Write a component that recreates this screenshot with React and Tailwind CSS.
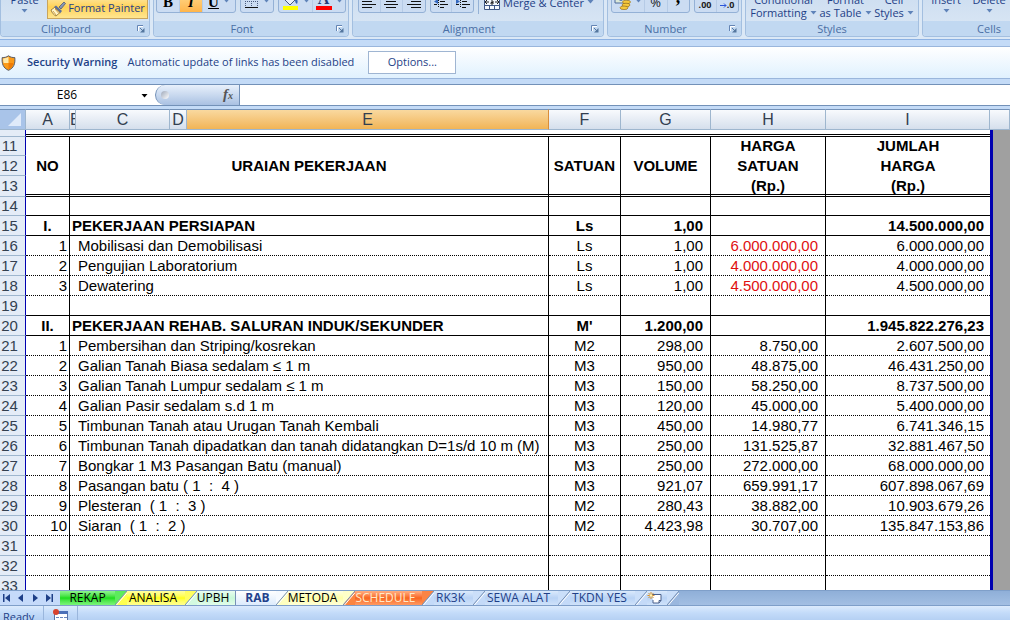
import { useState } from 'react'

const ROWS = [
  { n: 14, h: 'h-[19px]', line: 'solid' },
  { n: 15, no: 'I.', text: 'PEKERJAAN PERSIAPAN', unit: 'Ls', vol: '1,00', total: '14.500.000,00', head: true, line: 'solid' },
  { n: 16, no: '1', text: 'Mobilisasi dan Demobilisasi', unit: 'Ls', vol: '1,00', price: '6.000.000,00', total: '6.000.000,00', red: true },
  { n: 17, no: '2', text: 'Pengujian Laboratorium', unit: 'Ls', vol: '1,00', price: '4.000.000,00', total: '4.000.000,00', red: true },
  { n: 18, no: '3', text: 'Dewatering', unit: 'Ls', vol: '1,00', price: '4.500.000,00', total: '4.500.000,00', red: true },
  { n: 19, line: 'solid' },
  { n: 20, no: 'II.', text: 'PEKERJAAN REHAB. SALURAN INDUK/SEKUNDER', unit: "M'", vol: '1.200,00', total: '1.945.822.276,23', head: true, line: 'solid' },
  { n: 21, no: '1', text: 'Pembersihan dan Striping/kosrekan', unit: 'M2', vol: '298,00', price: '8.750,00', total: '2.607.500,00' },
  { n: 22, no: '2', text: 'Galian Tanah Biasa sedalam ≤ 1 m', unit: 'M3', vol: '950,00', price: '48.875,00', total: '46.431.250,00' },
  { n: 23, no: '3', text: 'Galian Tanah Lumpur sedalam ≤ 1 m', unit: 'M3', vol: '150,00', price: '58.250,00', total: '8.737.500,00' },
  { n: 24, no: '4', text: 'Galian Pasir sedalam s.d 1 m', unit: 'M3', vol: '120,00', price: '45.000,00', total: '5.400.000,00' },
  { n: 25, no: '5', text: 'Timbunan Tanah atau Urugan Tanah Kembali', unit: 'M3', vol: '450,00', price: '14.980,77', total: '6.741.346,15' },
  { n: 26, no: '6', text: 'Timbunan Tanah dipadatkan dan tanah didatangkan D=1s/d 10 m (M)', unit: 'M3', vol: '250,00', price: '131.525,87', total: '32.881.467,50' },
  { n: 27, no: '7', text: 'Bongkar 1 M3 Pasangan Batu (manual)', unit: 'M3', vol: '250,00', price: '272.000,00', total: '68.000.000,00' },
  { n: 28, no: '8', text: 'Pasangan batu ( 1  :  4 )', unit: 'M3', vol: '921,07', price: '659.991,17', total: '607.898.067,69' },
  { n: 29, no: '9', text: 'Plesteran  ( 1  :  3 )', unit: 'M2', vol: '280,43', price: '38.882,00', total: '10.903.679,26' },
  { n: 30, no: '10', text: 'Siaran  ( 1  :  2 )', unit: 'M2', vol: '4.423,98', price: '30.707,00', total: '135.847.153,86' },
  { n: 31 },
  { n: 32 },
  { n: 33 },
]

const TABS = [
  { name: 'REKAP', width: 'w-[55px]', body: 'bg-linear-to-b from-[#8df58d] via-[#17dd17] to-[#7bf57b] text-black', top: '#5cec5c', bottom: '#2fe32f' },
  { name: 'ANALISA', width: 'w-[58px] pr-[6px]', body: 'bg-linear-to-b from-[#ffffa0] via-[#ffff10] to-[#ffff90] text-black', top: '#ffff60', bottom: '#ffff50' },
  { name: 'UPBH', width: 'w-[39px] pr-[6px]', body: 'bg-linear-to-b from-[#e9fdf0] via-[#c8f8d8] to-[#e2fdea] text-black', top: '#d8fae4', bottom: '#d4fae0' },
  { name: 'RAB', width: 'w-[40px] pl-[3px]', body: 'bg-linear-to-b from-white to-[#dcebfd] font-bold text-[#23418c]', top: '#f6faff', bottom: '#e2effd' },
  { name: 'METODA', width: 'w-[55px] pr-[6px]', body: 'bg-linear-to-b from-[#ffffe4] via-[#ffffa8] to-[#ffffd8] text-black', top: '#ffffc8', bottom: '#ffffc0' },
  { name: 'SCHEDULE', width: 'w-[67px] pr-[6px]', body: 'bg-linear-to-b from-[#ffae80] via-[#f8651c] to-[#ff9a60] text-[#ffe9c8]', top: '#fb8444', bottom: '#fc8440' },
  { name: 'RK3K', width: 'w-[39px] pr-[6px]', body: 'bg-linear-to-b from-[#dbeafc] via-[#b9d3f5] to-[#cfe2fa] text-[#1f3f87]', top: '#cbdff9', bottom: '#c4daf8' },
  { name: 'SEWA ALAT', width: 'w-[73px] pr-[6px]', body: 'bg-linear-to-b from-[#dbeafc] via-[#b9d3f5] to-[#cfe2fa] text-[#1f3f87]', top: '#cbdff9', bottom: '#c4daf8' },
  { name: 'TKDN YES', width: 'w-[65px] pr-[6px]', body: 'bg-linear-to-b from-[#dbeafc] via-[#b9d3f5] to-[#cfe2fa] text-[#1f3f87]', top: '#cbdff9', bottom: '#c4daf8' },
]

const Caret = ({ className = 'fill-[#5f83b9]' }) => (
  <svg className={`box-content h-[4px] w-[7px] shrink-0 ${className}`} viewBox="0 0 7 4" aria-hidden="true">
    <path d="M.5 0h6L3.5 3.5z" />
  </svg>
)

const Launcher = ({ label }) => (
  <button aria-label={label} className="absolute right-1 top-[3px]">
    <svg width="9" height="9" viewBox="0 0 9 9" fill="none">
      <path d="M1.5 7V1.5H7" stroke="#6485b4" />
      <path d="M2.5 7V2.5H7" stroke="#fff" />
      <path d="M4 4l3.5 3.5" stroke="#55779f" />
      <path d="M8.5 4v4.5H4z" fill="#55779f" />
    </svg>
  </button>
)

const Group = ({ title, width, launcher, children }) => (
  <section className={`flex flex-col overflow-hidden rounded-b border border-t-0 border-[#a3bfe0] bg-linear-to-b from-[#cfdff1] to-[#dce8f5] ${width}`}>
    <div className="flex h-[21px] items-end justify-center overflow-hidden">{children}</div>
    <div className={`relative h-[15px] bg-[#c1d8f1] text-center text-[11px] leading-4 text-[#4a6fa5] ${launcher ? 'pr-[18px]' : ''}`}>
      {title}
      {launcher && <Launcher label={`${title} settings`} />}
    </div>
  </section>
)

const ButtonStrip = ({ children }) => (
  <div className="mb-2 flex h-6 shrink-0 items-stretch divide-x divide-[#b6cbe6] overflow-hidden rounded-[3px] border border-[#94b1d6] bg-[#cbdcf2]">
    {children}
  </div>
)

const Tool = ({ label, width, className = '', children }) => (
  <button aria-label={label} className={`flex items-end justify-center gap-1 ${width} ${className}`}>
    {children}
  </button>
)

const Lines = ({ d }) => (
  <svg width="15" height="17" viewBox="0 0 15 17" aria-hidden="true" className="mb-1">
    <path d={d} stroke="#111" />
  </svg>
)

const TallButton = ({ label, second, width }) => (
  <button className={`flex h-8 shrink-0 flex-col items-center justify-end whitespace-pre leading-[13px] ${width} ${second ? 'mb-[2px]' : 'mb-[6px]'}`}>
    <span>{label}</span>
    {second ? (
      <span className="flex items-center gap-[3px]">
        {second}
        <Caret />
      </span>
    ) : (
      <span className="flex h-[9px] items-center">
        <Caret />
      </span>
    )}
  </button>
)

const Ribbon = () => (
  <header className="flex h-10 gap-[3px] overflow-hidden border-b border-[#8db2e3] bg-[#dbe8f6] pb-[2px] text-[11px] text-[#1e3f87]">
    <Group title="Clipboard" width="w-[150px] shrink-0" launcher>
      <TallButton label="Paste" width="w-[45px]" />
      <button className="mb-[2px] flex h-6 shrink-0 items-center gap-[2px] border border-[#c9a45c] bg-linear-to-b from-[#fde8a4] via-[#ffd253] to-[#ffe690] px-[2px] pt-[3px] whitespace-nowrap">
        <svg width="16" height="16" viewBox="0 0 16 16" aria-hidden="true">
          <path d="M9 6l5-5 1.5 1.5L11 8z" fill="#8896b4" stroke="#43506e" strokeWidth="0.7" />
          <path d="M6 4.5l6 5.5-2 2.5L4 6z" fill="#5b6f9c" />
          <path d="M4.5 6.5L1 9c1 3 3 5 5 6l4-3.5z" fill="#fff6c9" stroke="#8b6a25" strokeWidth="0.8" />
          <path d="M3 10l3 4M5 8l3.5 4" stroke="#c98d2b" strokeWidth="0.8" />
        </svg>
        Format Painter
      </button>
    </Group>
    <Group title="Font" width="w-[196px] shrink-0" launcher>
      <div className="flex gap-1">
        <ButtonStrip>
          <Tool label="Bold" width="w-[23px]" className="font-['Liberation_Serif',serif] text-[15px] font-bold leading-5 text-black">B</Tool>
          <Tool label="Italic" width="w-[23px]" className="bg-linear-to-b from-[#ffdf93] to-[#ffb54a] font-['Liberation_Serif',serif] text-[15px] font-bold italic leading-5 text-black">I</Tool>
          <Tool label="Underline" width="w-[32px]" className="font-['Liberation_Serif',serif] text-[15px] font-bold leading-5 text-black">
            <span className="underline">U</span>
            <Caret className="mb-[9px] fill-[#5f83b9]" />
          </Tool>
        </ButtonStrip>
        <ButtonStrip>
          <Tool label="Borders" width="w-[32px]">
            <svg width="14" height="14" viewBox="0 0 14 14" className="mb-[3px]" aria-hidden="true">
              <path d="M.5 0v13M6.5 0v13M12.5 0v13M0 6.5h13" stroke="#4a5b80" strokeDasharray="1 1" />
              <path d="M0 12.5h13" stroke="#111" />
            </svg>
            <Caret className="mb-[9px] fill-[#5f83b9]" />
          </Tool>
        </ButtonStrip>
        <ButtonStrip>
          <Tool label="Fill color" width="w-[34px]">
            <svg width="17" height="17" viewBox="0 0 17 17" className="mb-[2px]" aria-hidden="true">
              <path d="M3 7l6-5 5 4-6 6z" fill="#e9f0fb" stroke="#44587f" />
              <path d="M13 5c3 1 3 4 2 6-2-1-2-3-2-6z" fill="#3565b8" />
              <path d="M1 13h15v4H1z" fill="#ff0" />
            </svg>
            <Caret className="mb-[9px] fill-[#5f83b9]" />
          </Tool>
          <Tool label="Font color" width="w-[32px]">
            <span className="mb-[2px] w-4 border-b-4 border-[#f00] font-['Liberation_Serif',serif] text-[16px] font-bold leading-[14px] text-[#253f7c]">A</span>
            <Caret className="mb-[9px] fill-[#5f83b9]" />
          </Tool>
        </ButtonStrip>
      </div>
    </Group>
    <Group title="Alignment" width="w-[252px] shrink-0" launcher>
      <div className="flex items-end gap-1 pr-1">
        <ButtonStrip>
          <Tool label="Align left" width="w-[22px]"><Lines d="M0 7.5h14M0 10.5h10M0 13.5h14M0 16.5h10" /></Tool>
          <Tool label="Center" width="w-[22px]"><Lines d="M0 7.5h14M2 10.5h10M0 13.5h14M2 16.5h10" /></Tool>
          <Tool label="Align right" width="w-[22px]"><Lines d="M0 7.5h14M4 10.5h10M0 13.5h14M4 16.5h10" /></Tool>
        </ButtonStrip>
        <ButtonStrip>
          <Tool label="Decrease indent" width="w-[21px]">
            <svg width="16" height="17" viewBox="0 0 16 17" className="mb-1" aria-hidden="true">
              <path d="M0 7.5h3M6 7.5h9M7 10.5h5M7 13.5h8M1 13.5h3M7 16.5h4" stroke="#111" />
              <path d="M5 8v5L1 10.5z" fill="#3468c0" />
              <path d="M5.5 7v10" stroke="#111" strokeDasharray="1 1" />
            </svg>
          </Tool>
          <Tool label="Increase indent" width="w-[21px]">
            <svg width="16" height="17" viewBox="0 0 16 17" className="mb-1" aria-hidden="true">
              <path d="M0 7.5h3M6 7.5h9M7 10.5h5M7 13.5h8M1 13.5h3M7 16.5h4" stroke="#111" />
              <path d="M1 8v5l4-2.5z" fill="#3468c0" />
              <path d="M5.5 7v10" stroke="#111" strokeDasharray="1 1" />
            </svg>
          </Tool>
        </ButtonStrip>
        <button className="mb-[7px] flex h-6 shrink-0 items-end gap-[3px] whitespace-nowrap border-l border-[#94b1d6] pl-[5px] leading-[22px]">
          <svg width="16" height="16" viewBox="0 0 16 16" className="mb-[4px]" aria-hidden="true">
            <path d="M.5 0v15.5h15V0M0 11.5h16M5.5 12v4M10.5 12v4M0 4.5h16" stroke="#3f5784" fill="#f4f8fd" />
            <path d="M1 8h4M11 8h4M3 6l-2 2 2 2M13 6l2 2-2 2" stroke="#222" fill="none" />
            <path d="M7 7h2v3H7V8.5h2" stroke="#222" fill="none" />
          </svg>
          Merge &amp; Center
          <Caret className="mb-[10px] fill-[#5f83b9]" />
        </button>
      </div>
    </Group>
    <Group title="Number" width="w-[135px] shrink-0" launcher>
      <div className="flex gap-1">
        <ButtonStrip>
          <Tool label="Accounting format" width="w-[33px]">
            <svg width="17" height="17" viewBox="0 0 17 17" className="mb-[2px]" aria-hidden="true">
              <path d="M1 2h12v8H1z" fill="#dce8d8" stroke="#4d6b9c" />
              <circle cx="7" cy="6" r="2" fill="#5577b0" />
              <ellipse cx="12.5" cy="9" rx="4" ry="1.8" fill="#f6c93c" stroke="#96701a" strokeWidth="0.7" />
              <ellipse cx="12" cy="12" rx="4" ry="1.8" fill="#f6c93c" stroke="#96701a" strokeWidth="0.7" />
              <ellipse cx="10" cy="14.8" rx="4" ry="1.8" fill="#f6c93c" stroke="#96701a" strokeWidth="0.7" />
            </svg>
            <Caret className="mb-[9px] fill-[#5f83b9]" />
          </Tool>
          <Tool label="Percent" width="w-[23px]" className="text-[13px] leading-[20px] text-[#222]">%</Tool>
          <Tool label="Comma style" width="w-[21px]" className="pb-[6px] font-['Liberation_Serif',serif] text-[18px] font-bold leading-[18px] text-black">,</Tool>
        </ButtonStrip>
        <ButtonStrip>
          <Tool label="Increase decimal" width="w-[22px]" className="pb-px text-[9px] font-bold leading-[12px] text-[#222]">
            <span>.00<br />.00</span>
          </Tool>
          <Tool label="Decrease decimal" width="w-[21px]" className="pb-px text-[9px] font-bold leading-[12px] text-[#222]">
            <span className="flex flex-col items-end">
              <span>.00</span>
              <span className="flex items-center">
                <svg width="7" height="5" viewBox="0 0 7 5" aria-hidden="true">
                  <path d="M0 2.5h6M4 .5l2 2-2 2" fill="none" stroke="#2c55d8" />
                </svg>
                .0
              </span>
            </span>
          </Tool>
        </ButtonStrip>
      </div>
    </Group>
    <Group title="Styles" width="w-[174px] shrink-0">
      <TallButton label="Conditional" second="Formatting" width="w-[70px]" />
      <TallButton label="Format" second="as Table" width="w-[54px]" />
      <TallButton label="Cell" second="Styles" width="w-[43px]" />
    </Group>
    <Group title="Cells" width="w-[134px] shrink-0">
      <TallButton label="Insert" width="w-[44px]" />
      <TallButton label="Delete" width="w-[42px]" />
      <TallButton label="Format" width="w-[44px]" />
    </Group>
  </header>
)

const SecurityBar = () => (
  <div className="mt-[6px] flex h-[33px] items-center border-y border-[#9ab6dc] bg-linear-to-b from-white to-[#e0f1fe] text-[11px] text-[#1e4287]">
    <svg className="ml-px h-4 w-[15px] shrink-0" viewBox="0 0 15 16" aria-hidden="true">
      <path d="M7.5.8C5.5 2.3 3.5 2.6 1.2 2.6c-.6 6 1 10.5 6.3 12.7 5.3-2.2 6.9-6.7 6.3-12.7-2.3 0-4.3-.3-6.3-1.8z" fill="#fb9a18" stroke="#555a66" />
      <path d="M7.5 1.8C5.8 3 4.2 3.4 2.2 3.5c-.1 1.8 0 3.3.4 4.5h4.9z" fill="#ffe9a8" />
      <path d="M7.5 8h5c-.7 2.9-2.3 5-5 6.3z" fill="#f07c05" />
    </svg>
    <strong className="ml-[11px] font-semibold whitespace-nowrap">Security Warning</strong>
    <span className="ml-[10px] whitespace-nowrap">Automatic update of links has been disabled</span>
    <button className="ml-[14px] h-[23px] w-[88px] shrink-0 border border-[#9fb5d2] bg-white">Options...</button>
  </div>
)

const FormulaBar = () => (
  <div className="mt-[5px] flex h-[22px] border-y border-[#7391b8] bg-white">
    <input
      aria-label="Name box"
      defaultValue="E86"
      className="w-[134px] shrink-0 bg-white text-center text-[12px] text-black outline-none"
    />
    <button aria-label="Name list" className="flex w-[21px] shrink-0 items-center justify-center bg-white pt-px">
      <Caret className="fill-black" />
    </button>
    <div className="flex w-[85px] shrink-0 items-center justify-between rounded-l-full border-r border-l border-[#7391b8] bg-linear-to-b from-[#e8f0fb] via-[#c9d9ef] to-[#a9c0e2] pr-[6px] pl-[5px]">
      <span className="size-2 rounded-full bg-linear-to-br from-[#9fa9ba] to-white" />
      <button aria-label="Insert function" className="font-['Liberation_Serif',serif] text-[15px] font-bold italic leading-4 text-[#555]">
        f<span className="text-[10px]">x</span>
      </button>
    </div>
    <input aria-label="Formula" className="min-w-0 flex-1 bg-white px-2 text-[12px] outline-none" />
  </div>
)

const COLUMN_HEAD = 'border-r border-[#9eb6ce] bg-linear-to-b from-[#f8fafd] to-[#d5dfec] font-normal'
const ROW_HEAD = 'overflow-hidden border-r border-b border-r-[#0000b0] border-b-[#9eb6ce] bg-[#e4ecf7] pr-[6px] text-center font-normal text-[#333f50]'

const RowHead = ({ children }) => (
  <th scope="row" className={ROW_HEAD}>
    {children}
  </th>
)

const Outside = ({ rowSpan }) => <td rowSpan={rowSpan} className="border-l-[3px] border-[#0000b0] bg-[#a0a0a0]" />

const DataRow = ({ row }) => {
  const line = row.line === 'solid' ? 'border-b border-black' : 'border-b border-dotted border-black'
  const weight = row.head ? 'font-bold' : ''
  const cell = `border-r ${line} [border-right-style:solid] whitespace-pre overflow-hidden ${weight}`

  return (
    <tr className={row.h || 'h-5'}>
      <RowHead>{row.n}</RowHead>
      <td className={`${cell} ${row.head ? 'text-center' : 'pr-[2px] text-right'}`}>{row.no}</td>
      <td colSpan={4} className={`${cell} ${row.head ? 'pl-[2px]' : 'pl-2'}`}>{row.text}</td>
      <td className={`${cell} text-center`}>{row.unit}</td>
      <td className={`${cell} pr-[7px] text-right`}>{row.vol}</td>
      <td className={`${cell} pr-[7px] text-right ${row.red ? 'text-[#e01010]' : ''}`}>{row.price}</td>
      <td className={`${line} overflow-hidden pr-[6px] text-right ${weight}`}>{row.total}</td>
      <Outside />
    </tr>
  )
}

const TitleCell = ({ colSpan, last, children }) => (
  <th colSpan={colSpan} rowSpan={3} className={`border-b-[3px] border-double border-black ${last ? '' : 'border-r [border-right-style:solid]'}`}>
    <div className="flex h-[57px] flex-col items-center justify-center leading-5">{children}</div>
  </th>
)

const Sheet = () => (
  <main className="mt-[3px] min-h-0 flex-1 overflow-hidden bg-white font-['Liberation_Sans',Arial,sans-serif] text-[15px] leading-[18px] text-black">
    <table className="w-full table-fixed border-separate border-spacing-0">
      <colgroup>
        <col className="w-[26px]" />
        <col className="w-[44px]" />
        <col className="w-[6px]" />
        <col className="w-[94px]" />
        <col className="w-[17px]" />
        <col className="w-[362px]" />
        <col className="w-[72px]" />
        <col className="w-[90px]" />
        <col className="w-[115px]" />
        <col className="w-[164px]" />
        <col />
      </colgroup>
      <thead>
        <tr className="h-[21px] text-[16px] text-[#333f50] [&>th]:border-t [&>th]:border-b [&>th]:border-t-[#7391b8] [&>th]:border-b-[#9eb6ce]">
          <th className="border-r border-[#9eb6ce] bg-[#a9c4e9]">
            <svg className="ml-2 block size-[13px]" viewBox="0 0 13 13" aria-hidden="true">
              <path d="M13 0v13H0z" fill="#dfeafa" />
            </svg>
          </th>
          <th className={COLUMN_HEAD}>A</th>
          <th className={`${COLUMN_HEAD} overflow-hidden`}><div className="w-[5px] overflow-hidden">B</div></th>
          <th className={COLUMN_HEAD}>C</th>
          <th className={COLUMN_HEAD}>D</th>
          <th className="border-r border-[#d98d3a] bg-linear-to-b from-[#f9d99f] to-[#f1b455] font-normal">E</th>
          <th className={COLUMN_HEAD}>F</th>
          <th className={COLUMN_HEAD}>G</th>
          <th className={COLUMN_HEAD}>H</th>
          <th className={COLUMN_HEAD}>I</th>
          <th className={COLUMN_HEAD} />
        </tr>
      </thead>
      <tbody>
        <tr className="h-[7px]">
          <th className={ROW_HEAD} />
          <td colSpan={9} className="border-b-[3px] border-double border-black" />
          <Outside />
        </tr>
        <tr className="h-[19px]">
          <RowHead>11</RowHead>
          <TitleCell>NO</TitleCell>
          <TitleCell colSpan={4}>URAIAN PEKERJAAN</TitleCell>
          <TitleCell>SATUAN</TitleCell>
          <TitleCell>VOLUME</TitleCell>
          <TitleCell>
            <span>HARGA</span>
            <span>SATUAN</span>
            <span>(Rp.)</span>
          </TitleCell>
          <TitleCell last>
            <span>JUMLAH</span>
            <span>HARGA</span>
            <span>(Rp.)</span>
          </TitleCell>
          <Outside rowSpan={3} />
        </tr>
        <tr className="h-5"><RowHead>12</RowHead></tr>
        <tr className="h-[21px]"><RowHead>13</RowHead></tr>
        {ROWS.map((row) => (
          <DataRow key={row.n} row={row} />
        ))}
      </tbody>
    </table>
  </main>
)

// Slanted edge shared by two neighbouring tabs
const Slash = ({ left, right }) => (
  <svg className="h-full w-3 shrink-0" viewBox="0 0 12 14" preserveAspectRatio="none" aria-hidden="true">
    <path d="M0 0h12L0 14z" fill={left} />
    <path d="M12 0v14H0z" fill={right} />
    <path d="M0 14L12 0" stroke="#7891b5" />
    <path d="M1.5 14L12 1.7" stroke="#fff" />
  </svg>
)

const SheetTabs = () => {
  const [active, setActive] = useState('RAB')

  return (
    <nav className="flex h-4 shrink-0 border-t border-b border-[#7f9fc9] bg-linear-to-b from-[#8fafd8] to-[#a3bfe3] text-[12px] leading-[14px]">
      <div className="flex w-[60px] shrink-0 items-center justify-around bg-[#c5dafa] fill-[#1e3f87] pr-1">
        <button aria-label="First sheet"><svg width="8" height="8" viewBox="0 0 8 8"><path d="M0 0h1.5v8H0zM7 0v8L2 4z" /></svg></button>
        <button aria-label="Previous sheet"><svg width="8" height="8" viewBox="0 0 8 8"><path d="M6 0v8L1 4z" /></svg></button>
        <button aria-label="Next sheet"><svg width="8" height="8" viewBox="0 0 8 8"><path d="M2 0v8l5-4z" /></svg></button>
        <button aria-label="Last sheet"><svg width="8" height="8" viewBox="0 0 8 8"><path d="M6.5 0H8v8H6.5zM1 0v8l5-4z" /></svg></button>
      </div>
      {TABS.map((tab, i) => (
        <div key={tab.name} className="flex shrink-0">
          <button
            aria-current={tab.name === active}
            onClick={() => setActive(tab.name)}
            className={`flex items-center justify-center whitespace-nowrap ${tab.width} ${tab.body} ${tab.name === 'UPBH' ? 'border-r border-[#7891b5]' : ''}`}
          >
            {tab.name}
          </button>
          {tab.name !== 'UPBH' && <Slash left={tab.top} right={TABS[i + 1] ? TABS[i + 1].bottom : '#c4daf8'} />}
        </div>
      ))}
      <button aria-label="Insert worksheet" className="w-5 shrink-0 bg-linear-to-b from-[#dbeafc] via-[#b9d3f5] to-[#cfe2fa]">
        <svg width="16" height="14" viewBox="0 0 16 14">
          <path d="M5 3.5h9v6L12 12H6V9" fill="#fff" stroke="#4a618c" />
          <path d="M14 9.5h-2V12" fill="none" stroke="#4a618c" />
          <path d="M4 1v7M.5 4.5h7M1.5 2l5 5M6.5 2l-5 5" stroke="#d9912a" />
          <circle cx="4" cy="4.5" r="1.3" fill="#fff3b0" />
        </svg>
      </button>
      <Slash left="#cbdff9" right="#9ab7de" />
    </nav>
  )
}

const StatusBar = () => (
  <footer className="flex h-[14px] shrink-0 items-start overflow-hidden bg-linear-to-b from-[#dcebfd] via-[#c3dbf9] to-[#b5d0f3] text-[11px] text-[#1e3f87]">
    <span className="w-[43px] pt-[3px] pl-[3px] leading-4">Ready</span>
    <div className="flex h-full w-[35px] justify-center border-x border-[#9ab6dc] pt-[3px]">
      <svg width="16" height="16" viewBox="0 0 16 16" aria-hidden="true">
        <path d="M1.5 2.5h13v12h-13z" fill="#fff" stroke="#5a74a8" />
        <path d="M1 2h14v3H1z" fill="#4c70b8" />
        <path d="M3 8.5h3M7 8.5h3M11 8.5h3M3 11.5h3M7 11.5h3M11 11.5h3" stroke="#6b88bf" />
        <circle cx="3" cy="3" r="3" fill="#d8432f" />
      </svg>
    </div>
  </footer>
)

const App = () => (
  <div className="flex h-screen flex-col overflow-hidden bg-[#c4dbf7] font-['Open_Sans','Noto_Sans',sans-serif]">
    <Ribbon />
    <SecurityBar />
    <FormulaBar />
    <Sheet />
    <SheetTabs />
    <StatusBar />
  </div>
)

export default App
